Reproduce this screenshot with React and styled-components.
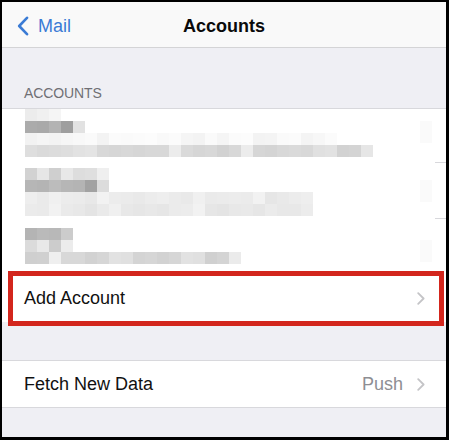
import React from 'react'
import styled, { createGlobalStyle } from 'styled-components'

const GlobalStyle = createGlobalStyle`
  html, body {
    margin: 0;
    padding: 0;
    background: #000;
  }
  body {
    font-family: "Liberation Sans", Arial, sans-serif;
  }
`

// blurred account rows, 12px pixel blocks
const blurred = [
  {
    top: 0,
    h: 54,
    lines: [
      ['#ececec', '#f0f0f0', '#f5f5f5'],
      ['#ababab', '#a9a9a9', '#b3b3b3', '#9e9e9e', '#e2e2e2'],
      ['#f2f2f2', '#f5f5f5', '#f3f3f3', '#f6f6f6', '#f8f8f8', '#fafafa', '#f3f3f3', '#fbfbfb', '#fafafa', '#fbfbfb', '#fcfcfc', '#f9f9f9', '#fbfbfb', '#f5f5f5', '#f3f3f3', '#fafafa', '#f5f5f5', '#fbfbfb', '#fcfcfc', '#f3f3f3', '#f4f4f4', '#fafafa', '#fbfbfb', '#f4f4f4', '#f7f7f7', '#fbfbfb'],
      ['#dedede', '#dadada', '#dcdcdc', '#dedede', '#e2e2e2', '#e4e4e4', '#d8d8d8', '#d6d6d6', '#d8d8d8', '#d6d6d6', '#d8d8d8', '#d8d8d8', '#ececec', '#dadada', '#d6d6d6', '#d8d8d8', '#d2d2d2', '#d8d8d8', '#ececec', '#d6d6d6', '#d4d4d4', '#d8d8d8', '#dadada', '#d8d8d8', '#e0e0e0', '#e2e2e2', '#d2d2d2', '#d4d4d4', '#e6e6e6'],
    ],
  },
  {
    top: 5,
    h: 56,
    lines: [
      ['#d2d2d2', '#e6e6e6', '#cfcfcf', '#e8e8e8', '#dddddd', '#dfdfdf', '#efefef'],
      ['#b6b6b6', '#b4b4b4', '#bcbcbc', '#b6b6b6', '#b4b4b4', '#a2a2a2', '#dcdcdc'],
      ['#eeeeee', '#eaeaea', '#f0f0f0', '#ececec', '#ebebeb', '#e8e8e8', '#f2f2f2', '#ececec', '#ebebeb', '#e9e9e9', '#ececec', '#eeeeee', '#ebebeb', '#e9e9e9', '#f0f0f0', '#eaeaea', '#ebebeb', '#ececec', '#ebebeb', '#f2f2f2', '#e6e6e6', '#e9e9e9', '#ececec', '#eeeeee'],
      ['#ebebeb', '#eaeaea', '#f2f2f2', '#eaeaea', '#e8e8e8', '#e4e4e4', '#eaeaea', '#f0f0f0', '#e8e8e8', '#e6e6e6', '#e8e8e8', '#e6e6e6', '#ebebeb', '#ececec', '#f2f2f2', '#e6e6e6', '#e4e4e4', '#e8e8e8', '#e9e9e9', '#e6e6e6', '#ebebeb', '#e8e8e8', '#e8e8e8', '#ececec'],
    ],
  },
  {
    top: 9,
    h: 55,
    lines: [
      ['#b4b4b4', '#bababa', '#b8b8b8', '#cccccc'],
      ['#dbdbdb', '#e8e8e8', '#cccccc', '#ececec'],
      ['#cfcfcf', '#d0d0d0', '#efefef', '#d8d8d8', '#d8d8d8', '#d2d2d2', '#d6d6d6', '#e2e2e2', '#e0e0e0', '#d4d4d4', '#d6d6d6', '#d2d2d2', '#d6d6d6', '#e2e2e2', '#e0e0e0', '#d0d0d0', '#d4d4d4', '#ebebeb'],
    ],
  },
]

const Chevron = ({ color = '#c4c4c7' }) => (
  <svg width="8" height="13" viewBox="0 0 8 13" fill="none">
    <path d="M1.2 1.2L6.6 6.5L1.2 11.8" stroke={color} strokeWidth="1.8" strokeLinecap="round" strokeLinejoin="round" />
  </svg>
)

const App = () => {
  return (
    <>
      <GlobalStyle />
      <Frame>
        <NavBar>
          <BackLink>
            <svg width="12" height="20" viewBox="0 0 12 20" fill="none">
              <path d="M10 1.8L2.2 10L10 18.2" stroke="#3a7bd5" strokeWidth="2.6" strokeLinecap="round" strokeLinejoin="round" />
            </svg>
            <span>Mail</span>
          </BackLink>
          <Title>Accounts</Title>
          <span />
        </NavBar>

        <SectionHeader>ACCOUNTS</SectionHeader>

        <Section>
          {blurred.map((acc, i) => (
            <AccountRow key={i} $top={acc.top} $h={acc.h} $sep={i < 2}>
              <Pixels>
                {acc.lines.map((line, j) => (
                  <PixelLine key={j}>
                    {line.map((c, k) => (
                      <Block key={k} $c={c} />
                    ))}
                  </PixelLine>
                ))}
              </Pixels>
              <GhostChevron />
            </AccountRow>
          ))}
          <AddRow>
            <Label>Add Account</Label>
            <Chevron />
          </AddRow>
        </Section>

        <Gap />

        <Section $bottom>
          <FetchRow>
            <Label>Fetch New Data</Label>
            <Trail>
              <Detail>Push</Detail>
              <Chevron />
            </Trail>
          </FetchRow>
        </Section>
      </Frame>
    </>
  )
}

const Frame = styled.div`
  margin: 2px 3px 3px 2px;
  width: 444px;
  height: 435px;
  background: #efeff4;
  overflow: hidden;
  display: flex;
  flex-direction: column;
`

const NavBar = styled.header`
  height: 46px;
  flex: none;
  box-sizing: border-box;
  background: #f9f9f9;
  border-bottom: 1px solid #d4d4d6;
  display: grid;
  grid-template-columns: 1fr auto 1fr;
  align-items: center;
  padding: 3px 14px 0;
`

const BackLink = styled.div`
  display: flex;
  align-items: center;
  gap: 9px;
  color: #3a7bd5;
  font-size: 18px;
  margin-left: 1px;
`

const Title = styled.div`
  font-size: 18px;
  font-weight: 700;
  color: #0a0a0a;
`

const SectionHeader = styled.div`
  height: 60px;
  flex: none;
  display: flex;
  align-items: flex-end;
  padding: 0 22px 7px;
  box-sizing: border-box;
  font-size: 14px;
  letter-spacing: -0.1px;
  color: #6f6f74;
`

const Section = styled.section`
  background: #fff;
  border-top: 1px solid #d8d8dc;
  border-bottom: ${(p) => (p.$bottom ? '1px solid #d8d8dc' : 'none')};
  flex: none;
`

const AccountRow = styled.div`
  position: relative;
  height: ${(p) => p.$h}px;
  box-sizing: border-box;
  padding: ${(p) => p.$top}px 14px 0 23px;
  display: flex;
  justify-content: space-between;
  &::after {
    content: '';
    display: ${(p) => (p.$sep ? 'block' : 'none')};
    position: absolute;
    left: 433px;
    right: 0;
    bottom: 0;
    height: 1px;
    background: #d8d8dc;
  }
`

const Pixels = styled.div`
  display: flex;
  flex-direction: column;
`

const PixelLine = styled.div`
  display: flex;
  height: 12px;
`

const Block = styled.div`
  width: 12px;
  height: 12px;
  background: ${(p) => p.$c};
`

const GhostChevron = styled.div`
  width: 12px;
  height: 22px;
  margin-top: 12px;
  background: #fafafa;
`

const AddRow = styled.div`
  position: relative;
  height: 48px;
  display: flex;
  align-items: center;
  justify-content: space-between;
  padding: 0 21px 0 22px;
  &::after {
    content: '';
    position: absolute;
    top: -3px;
    bottom: -4px;
    left: 6px;
    right: 2px;
    border: 5px solid #d3261d;
    pointer-events: none;
  }
`

const Gap = styled.div`
  height: 38px;
  flex: none;
`

const FetchRow = styled.div`
  height: 46px;
  display: flex;
  align-items: center;
  justify-content: space-between;
  padding: 0 21px 0 22px;
`

const Label = styled.span`
  font-size: 18px;
  color: #111;
`

const Trail = styled.div`
  display: flex;
  align-items: center;
  gap: 14px;
`

const Detail = styled.span`
  font-size: 18px;
  color: #8e8e93;
`

export default App
